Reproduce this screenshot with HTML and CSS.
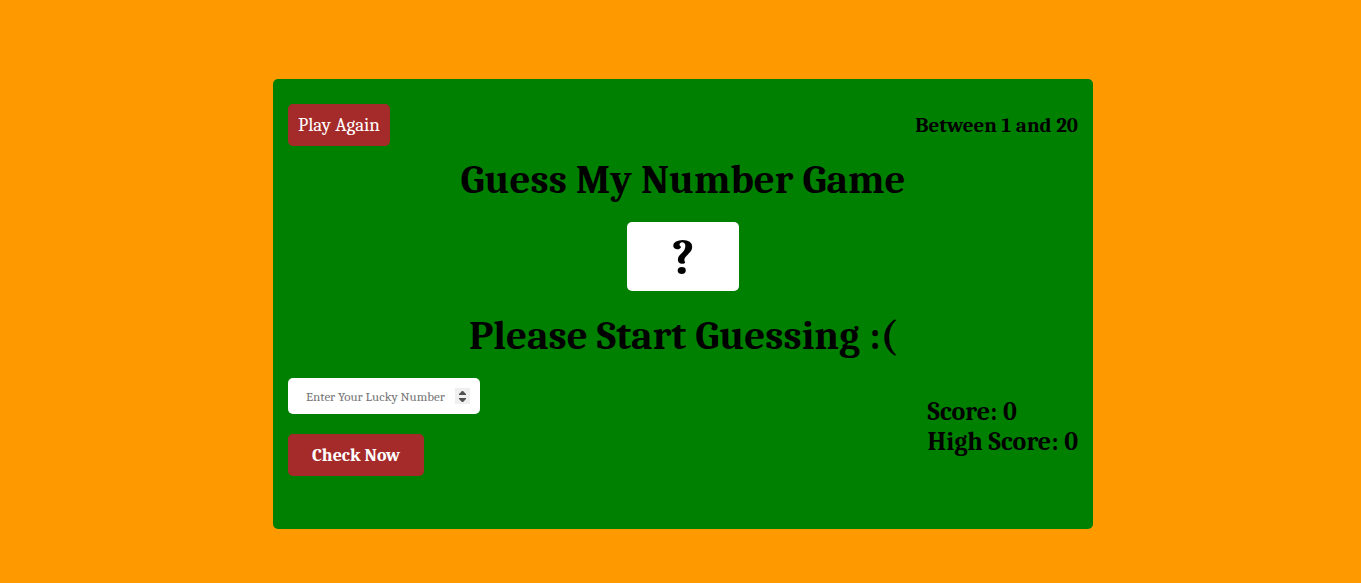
FILE: index.html
```
<!DOCTYPE html>
<html lang="en">
<head>
<meta charset="utf-8">
<meta name="viewport" content="width=device-width, initial-scale=1">
<title>Guess My Number Game</title>
<link rel="stylesheet" href="styles.css">
</head>
<body>
<main class="game">
  <header class="top">
    <button class="btn again" type="button">Play Again</button>
    <p class="range">Between 1 and 20</p>
  </header>
  <h1 class="heading">Guess My Number Game</h1>
  <div class="secret">?</div>
  <h2 class="heading message">Please Start Guessing :(</h2>
  <section class="bottom">
    <form class="guess">
      <input class="field" type="number" aria-label="Enter Your Lucky Number" placeholder="Enter Your Lucky Number">
      <button class="btn check" type="button">Check Now</button>
    </form>
    <div class="scores">
      <p>Score: <span>0</span></p>
      <p>High Score: <span>0</span></p>
    </div>
  </section>
</main>
</body>
</html>
```
FILE: styles.css
```
* {
  box-sizing: border-box;
  margin: 0;
  padding: 0;
}

body {
  padding: 79px 0 54px 5px;
  background: #ff9900;
  color: #000;
  font-family: Cambria, Caladea, "Liberation Serif", serif;
}

.game {
  max-width: 820px;
  min-height: 450px;
  margin: 0 auto;
  padding: 25px 15px;
  border-radius: 5px;
  background: green;
}

.top,
.bottom {
  display: flex;
  justify-content: space-between;
}

.top {
  align-items: center;
}

.btn {
  height: 42px;
  border: 0;
  border-radius: 5px;
  background: brown;
  color: #fff;
  font-family: inherit;
}

.again {
  width: 102px;
  font-size: 19px;
}

.check {
  width: 136px;
  font-size: 18px;
  font-weight: 700;
}

.range {
  font-size: 21px;
  font-weight: 700;
}

.heading {
  margin-top: 10px;
  font-size: 41px;
  line-height: 48px;
  text-align: center;
}

.secret {
  width: 112px;
  margin: 18px auto 0;
  border-radius: 5px;
  background: #fff;
  font-size: 51px;
  font-weight: 700;
  line-height: 71px;
  height: 69px;
  text-align: center;
}

.message {
  margin-top: 21px;
}

.bottom {
  align-items: center;
  margin-top: 18px;
}

.guess {
  display: flex;
  flex-direction: column;
  align-items: flex-start;
  gap: 20px;
}

.field {
  width: 192px;
  height: 36px;
  padding: 0 10px 0 18px;
  border: 0;
  border-radius: 5px;
  background: #fff;
  font-family: inherit;
  font-size: 13px;
}

.field::-webkit-inner-spin-button {
  -webkit-appearance: none;
  width: 15px;
  height: 16px;
  opacity: 1;
  background: #efefef url("data:image/svg+xml,%3Csvg xmlns='http://www.w3.org/2000/svg' width='15' height='16'%3E%3Cpath fill='%23505050' d='M4 7V6l3-3h1l3 3v1zM4 10h7v1l-3 3H7l-3-3z'/%3E%3C/svg%3E") no-repeat center;
}

.scores {
  font-size: 26px;
  font-weight: 700;
  line-height: 30px;
}
```
